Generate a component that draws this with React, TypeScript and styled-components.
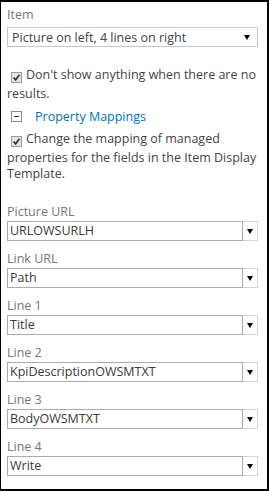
import React from "react";
import styled, { createGlobalStyle } from "styled-components";

const GlobalStyle = createGlobalStyle`
  html, body {
    margin: 0;
    padding: 0;
    background: #fff;
  }
  * {
    box-sizing: border-box;
  }
`;

const Panel = styled.div`
  width: 269px;
  height: 491px;
  border-style: solid;
  border-color: #000;
  border-width: 2px 2px 2px 1px;
  padding: 4px 9px 0 6px;
  font-family: "Open Sans", "Liberation Sans", sans-serif;
  font-size: 12.5px;
  color: #444;
  display: flex;
  flex-direction: column;
`;

const Label = styled.div`
  color: #777;
  line-height: 18px;
  height: 18px;
`;

const SelectBox = styled.div`
  margin-top: 3px;
  height: 20px;
  border: 1px solid #c6c6c6;
  display: flex;
  align-items: center;
  justify-content: space-between;
  padding: 0 7px 0 4px;
  color: #444;
  white-space: nowrap;
`;

const Option = styled.div<{ $top: number }>`
  margin-top: ${({ $top }) => $top}px;
  line-height: 16px;
`;

const Check = styled.span`
  display: inline-block;
  width: 11px;
  height: 11px;
  margin: 0 4px 3px 4px;
  vertical-align: -7px;
  border: 1px solid #9a9a9a;
  background: #e6e6e6;
  position: relative;

  svg {
    position: absolute;
    left: 0;
    top: 0;
  }
`;

const Toggle = styled.div`
  margin-top: 5px;
  display: flex;
  align-items: center;
  height: 18px;
`;

const MinusBox = styled.span`
  width: 11px;
  height: 11px;
  margin-left: 4px;
  border: 1px solid #8a8a8a;
  display: flex;
  align-items: center;
  justify-content: center;

  &::after {
    content: "";
    width: 5px;
    height: 1px;
    background: #333;
  }
`;

const Link = styled.a`
  margin-left: 13px;
  color: #0072c6;
  text-decoration: none;
`;

const Mappings = styled.div`
  margin-top: 21px;
  display: flex;
  flex-direction: column;
`;

const Field = styled.div`
  margin-bottom: 9px;
`;

const Combo = styled.div`
  height: 20px;
  display: flex;
`;

const ComboInput = styled.div`
  flex: 1;
  border: 1px solid #ababab;
  color: #3a3a3a;
  line-height: 18px;
  padding-left: 2px;
  white-space: nowrap;
  overflow: hidden;
`;

const ComboButton = styled.div`
  width: 15px;
  border: 1px solid #d5d5d5;
  border-left: none;
  display: flex;
  align-items: center;
  justify-content: center;
`;

const Arrow = () => (
  <svg width="6" height="5" viewBox="0 0 6 5">
    <polygon points="0,0 6,0 3,5" fill="#000" />
  </svg>
);

const CheckMark = () => (
  <svg width="9" height="9" viewBox="0 0 9 9">
    <path
      d="M1.6 4.6 L3.6 6.8 L7.5 1.8"
      fill="none"
      stroke="#3a3a3a"
      strokeWidth="1.8"
    />
  </svg>
);

const mappings = [
  { label: "Picture URL", value: "URLOWSURLH" },
  { label: "Link URL", value: "Path" },
  { label: "Line 1", value: "Title" },
  { label: "Line 2", value: "KpiDescriptionOWSMTXT" },
  { label: "Line 3", value: "BodyOWSMTXT" },
  { label: "Line 4", value: "Write" },
];

export default function App() {
  return (
    <>
      <GlobalStyle />
      <Panel>
        <Label>Item</Label>
        <SelectBox>
          <span>Picture on left, 4 lines on right</span>
          <Arrow />
        </SelectBox>
        <Option $top={20}>
          <Check>
            <CheckMark />
          </Check>
          Don't show anything when there are no results.
        </Option>
        <Toggle>
          <MinusBox />
          <Link href="#">Property Mappings</Link>
        </Toggle>
        <Option $top={6}>
          <Check>
            <CheckMark />
          </Check>
          Change the mapping of managed properties for the fields in the Item
          Display Template.
        </Option>
        <Mappings>
          {mappings.map((m) => (
            <Field key={m.label}>
              <Label>{m.label}</Label>
              <Combo>
                <ComboInput>{m.value}</ComboInput>
                <ComboButton>
                  <Arrow />
                </ComboButton>
              </Combo>
            </Field>
          ))}
        </Mappings>
      </Panel>
    </>
  );
}
